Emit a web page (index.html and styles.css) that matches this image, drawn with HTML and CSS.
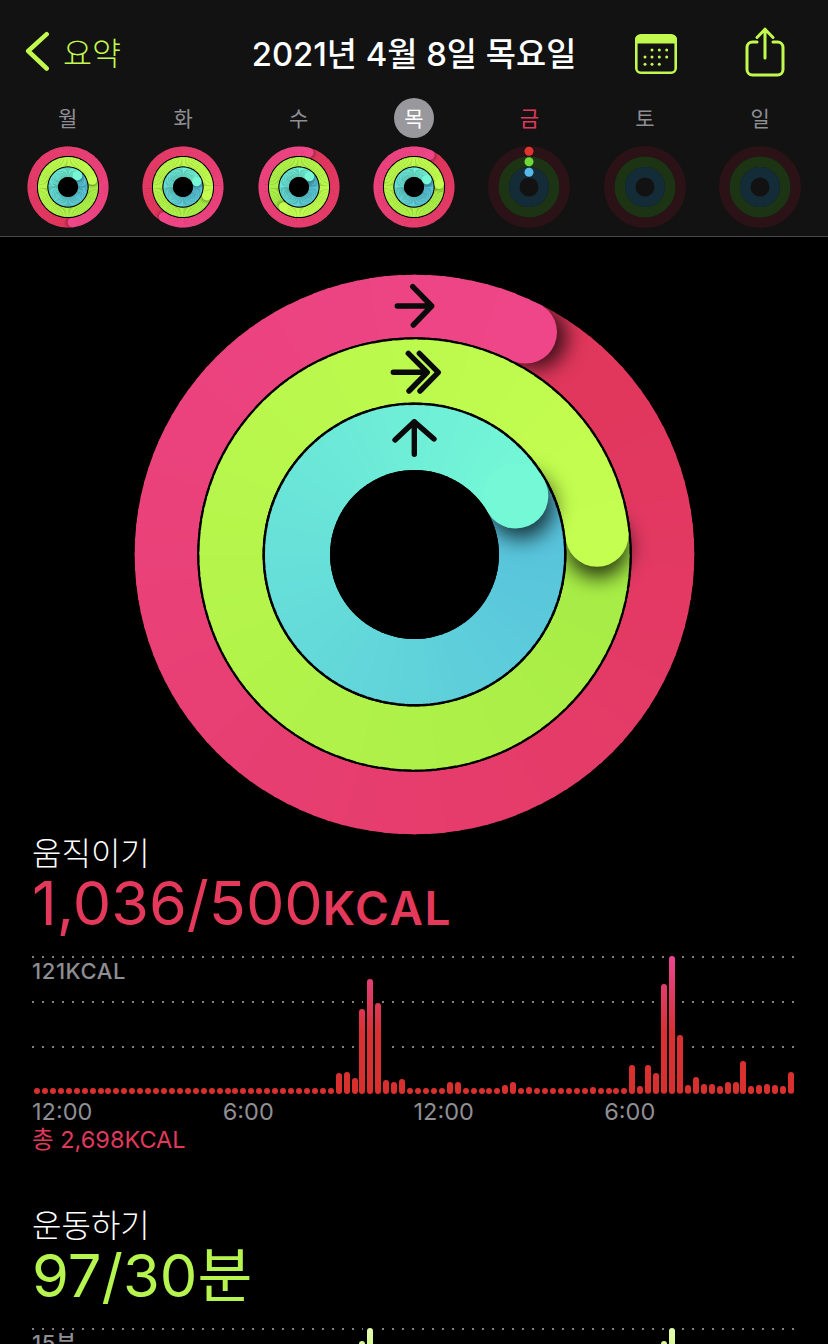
FILE: index.html
```html
<!DOCTYPE html>
<html lang="ko">
    <head>
        <meta charset="utf-8" />
        <meta name="viewport" content="width=device-width, initial-scale=1" />
        <title>활동</title>
        <link rel="stylesheet" href="styles.css">
    </head>
    <body>
        <header class="top">
            <div class="nav">
                <a class="back">
                    <svg class="chevron" width="24" height="40" viewBox="0 0 24 40">
                        <path d="M21.7 3.2 3.2 20 21.7 37.5" />
                    </svg>
                    <span>요약</span>
                </a>
                <h1 class="title">2021년 4월 8일 목요일</h1>
                <div class="nav-icons">
                    <svg class="cal" width="44" height="40" viewBox="0 0 44 40">
                        <rect x="2.3" y="1.3" width="39.4" height="37.4" rx="4.5" />
                        <path class="cal-band" d="M1 9.5V5.5A4.5 4.5 0 0 1 5.5 1h33a4.5 4.5 0 0 1 4.500 4.500v4z" />
                        <g class="cal-dots">
                            <circle cx="18" cy="16" r="1.500" /><circle cx="25.300" cy="16" r="1.500" /><circle cx="32.700" cy="16" r="1.500" />
                            <circle cx="11" cy="23" r="1.500" /><circle cx="18" cy="23" r="1.500" /><circle cx="25.300" cy="23" r="1.500" /><circle cx="32.700" cy="23" r="1.500" />
                            <circle cx="11" cy="30.300" r="1.500" /><circle cx="18" cy="30.300" r="1.500" /><circle cx="25.300" cy="30.300" r="1.500" />
                        </g>
                    </svg>
                    <svg class="share" width="40" height="50" viewBox="0 0 40 50">
                        <path d="M12 15H7.500A5.500 5.500 0 0 0 2 20.500v22A5.500 5.500 0 0 0 7.500 48h25a5.500 5.500 0 0 0 5.500-5.500v-22A5.500 5.500 0 0 0 32.500 15H28" />
                        <path d="M20 31V2M12 10.500 20 2.300l8 8.200" />
                    </svg>
                </div>
            </div>

            <ul class="week">
                <li class="day"><span class="day-name">월</span><svg class="ring" data-ends="173,74,40"></svg></li>
                <li class="day"><span class="day-name">화</span><svg class="ring" data-ends="213,110,69"></svg></li>
                <li class="day"><span class="day-name">수</span><svg class="ring" data-ends="16,218,45"></svg></li>
                <li class="day day-selected"><span class="day-name">목</span><svg class="ring" data-ends="26.600,84,60"></svg></li>
                <li class="day day-today"><span class="day-name">금</span><svg class="ring" data-empty="dots"></svg></li>
                <li class="day"><span class="day-name">토</span><svg class="ring" data-empty="plain"></svg></li>
                <li class="day"><span class="day-name">일</span><svg class="ring" data-empty="plain"></svg></li>
            </ul>
        </header>

        <main>
            <div class="big-ring">
                <svg class="ring-large" data-ends="26.600,84,60">
                    <g class="ring-arrows" id="arrows">
                        <path d="M263.300 32H297.700M278.700 12.700 297.700 32 279.300 51" />
                        <path d="M259.300 98.300H293M274.300 79.300 293.300 98.300 275 117M285.300 79.300 304.300 98.300 286 117" />
                        <path d="M280.300 180.300V147.700M261 166 280.300 147.700 300 165" />
                    </g>
                </svg>
            </div>

            <section class="stat stat-move">
                <h2 class="stat-name">움직이기</h2>
                <p class="stat-value">1,036/500<small>KCAL</small></p>
                <div class="chart" id="move-chart"><span class="chart-max">121KCAL</span></div>
                <div class="hours"><span>12:00</span><span>6:00</span><span>12:00</span><span>6:00</span></div>
                <p class="stat-total">총 2,698KCAL</p>
            </section>

            <section class="stat stat-exercise">
                <h2 class="stat-name">운동하기</h2>
                <p class="stat-value">97/30분</p>
                <div class="chart" id="exercise-chart"><span class="chart-max">15분</span></div>
            </section>
        </main>

        <script src="rings.js"></script>
    </body>
</html>
```

FILE: styles.css
```css
* {
    box-sizing: border-box;
}

body {
    margin: 0;
    height: 100vh;
    overflow: hidden;
    background: #000;
    color: #fff;
    font-family: Inter, "Noto Sans CJK KR", sans-serif;
}

h1,
h2,
p,
ul {
    margin: 0;
    padding: 0;
    font-weight: 400;
}

.top {
    height: 237px;
    padding-top: 27px;
    background: #121212;
    border-bottom: 1px solid #4a4a4a;
}

.nav {
    display: grid;
    grid-template-columns: 1fr auto 1fr;
    align-items: center;
    height: 50px;
    margin-bottom: 21px;
}

.back {
    display: flex;
    align-items: center;
    gap: 14px;
    padding-left: 25px;
    color: #c2f94e;
    font-size: 31.5px;
    font-weight: 300;
    margin-top: -2px;
}

.chevron {
    fill: none;
    stroke: #c2f94e;
    stroke-width: 4.5;
    stroke-linecap: round;
    stroke-linejoin: round;
}

.title {
    font-size: 32.8px;
    font-weight: 500;
    margin-top: -2px;
}

.nav-icons {
    display: flex;
    align-items: center;
    justify-content: flex-end;
    gap: 67px;
    padding-right: 43px;
}

.cal {
    margin-bottom: -4px;
}

.cal rect {
    fill: none;
    stroke: #c2f94e;
    stroke-width: 2.6;
}

.cal-band,
.cal-dots {
    fill: #c2f94e;
}

.share {
    fill: none;
    stroke: #c2f94e;
    stroke-width: 3;
    stroke-linecap: round;
    stroke-linejoin: round;
}

.week {
    display: grid;
    grid-template-columns: repeat(7, 1fr);
    padding: 0 10px;
    list-style: none;
}

.day {
    display: flex;
    flex-flow: column;
    align-items: center;
    gap: 8px;
}

.day-name {
    width: 40px;
    height: 40px;
    border-radius: 50%;
    color: #8e8e93;
    font-size: 21px;
    line-height: 42px;
    text-align: center;
}

.day-selected .day-name {
    background: #98989d;
    color: #fff;
}

.day-today .day-name {
    color: #e0395c;
}

.ring {
    width: 82px;
    height: 82px;
}

.big-ring {
    display: flex;
    justify-content: center;
    padding-top: 37px;
}

.ring-large {
    width: 560px;
    height: 560px;
    overflow: visible;
}

.ring-arrows path {
    fill: none;
    stroke: #0a0a0a;
    stroke-width: 5.4;
    stroke-linecap: round;
    stroke-linejoin: round;
}

.stat {
    padding: 0 33px 0 32px;
}

.stat-exercise {
    margin-top: 53px;
}

.stat-name {
    height: 36px;
    font-size: 32px;
    font-weight: 300;
    line-height: 40px;
}

.stat-value {
    height: 66px;
    font-size: 61px;
    line-height: 67px;
    white-space: nowrap;
}

.stat-value small {
    font-size: 46px;
    font-weight: 600;
    letter-spacing: 1.6px;
    line-height: 1;
}

.stat-move .stat-value {
    color: #e5395c;
}

.stat-exercise .stat-value {
    color: #b6f54f;
    font-size: 59.6px;
}

.chart {
    position: relative;
    isolation: isolate;
    display: flex;
    align-items: flex-end;
    gap: 1.94px;
    height: 138px;
    margin-top: 20px;
    padding-left: 2px;
    --dot: radial-gradient(circle, #808080 0.8px, transparent 1.1px);
    background-image: var(--dot), var(--dot), var(--dot);
    background-size: 10px 2px;
    background-repeat: repeat-x;
    background-position: -4px 0, -4px 45px, -4px 90px;
}

.chart-max {
    position: absolute;
    top: 2px;
    left: 0;
    color: #8e8e93;
    font-size: 22px;
    font-weight: 500;
    letter-spacing: 0.6px;
    line-height: 26px;
}

.bar {
    position: relative;
    flex: none;
    width: 6px;
    border-radius: 3px;
    background-position: bottom;
    background-size: 100% 138px;
}

/* keeps the dotted lines away from the tall bars */
.bar::before {
    content: "";
    position: absolute;
    inset: 0 -4px;
    background: #000;
    z-index: -1;
}

.stat-move .bar {
    background-image: linear-gradient(to top, #d8302e, #da3034 45%, #e03c68 75%, #ea4690);
}

.stat-exercise .bar {
    background-image: linear-gradient(to top, #b6f54f, #c8f870 70%, #e4fcb0);
}

.hours {
    display: grid;
    grid-template-columns: repeat(4, 1fr);
    margin-top: 3px;
    color: #8e8e93;
    font-size: 23.5px;
    line-height: 30px;
}

.stat-total {
    color: #e0395c;
    font-size: 23.5px;
    line-height: 26px;
}
```

FILE: rings.js
```js
const SVG_NS = 'http://www.w3.org/2000/svg'

const COLORS = [
    { from: [224, 54, 90], to: [238, 70, 136], dim: '#2a1216', dot: '#e0352f' },
    { from: [166, 236, 70], to: [196, 254, 80], dim: '#1c3414', dot: '#6fd83a' },
    { from: [86, 192, 220], to: [116, 248, 214], dim: '#142c38', dot: '#5ab8e6' },
]

const LARGE = { c: 280.5, rings: [[248.5, 62.5], [183.5, 63], [117, 65]], shade: 0.75 }
const SMALL = { c: 41, rings: [[35.75, 9.5], [25.25, 9.5], [14.75, 9.5]], shade: 0.3 }

function add(parent, tag, attrs) {
    let el = document.createElementNS(SVG_NS, tag)
    for (let key in attrs) el.setAttribute(key, attrs[key])
    parent.insertBefore(el, parent.querySelector('#arrows'))
    return el
}

function point(c, r, deg) {
    let a = (deg * Math.PI) / 180
    return [c + r * Math.sin(a), c - r * Math.cos(a)]
}

function mix(from, to, t) {
    return `rgb(${from.map((v, i) => Math.round(v + (to[i] - v) * t)).join(',')})`
}

function arc(svg, c, r, w, a, b, color) {
    let [x1, y1] = point(c, r, a)
    let [x2, y2] = point(c, r, b)
    add(svg, 'path', { d: `M${x1} ${y1}A${r} ${r} 0 0 1 ${x2} ${y2}`, fill: 'none', stroke: color, 'stroke-width': w })
}

// the colour runs one full lap and is brightest at the ring's head
function drawRing(svg, c, r, w, end, color, shade) {
    let step = 3
    for (let d = 0; d < 360; d += step) {
        if (d === 180) {
            let [sx, sy] = point(c, r, end + (w * 10) / r)
            let shadow = add(svg, 'circle', { cx: sx, cy: sy, r: w / 2, fill: '#000', 'fill-opacity': shade })
            shadow.style.filter = `blur(${w * 0.16}px)`
        }
        arc(svg, c, r, w, end + d, end + d + step + 0.8, mix(color.from, color.to, d / 360))
    }
    let [x, y] = point(c, r, end)
    add(svg, 'circle', { cx: x, cy: y, r: w / 2, fill: mix(color.from, color.to, 1) })
}

function renderRing(svg) {
    let size = svg.classList.contains('ring-large') ? LARGE : SMALL
    let ends = svg.dataset.ends ? svg.dataset.ends.split(',').map(Number) : null

    size.rings.forEach(([r, w], i) => {
        if (ends) {
            drawRing(svg, size.c, r, w, ends[i], COLORS[i], size.shade)
            add(svg, 'circle', { cx: size.c, cy: size.c, r: r - w / 2, fill: '#000' })
        } else {
            add(svg, 'circle', { cx: size.c, cy: size.c, r: r, fill: 'none', stroke: COLORS[i].dim, 'stroke-width': w + 1 })
        }
    })

    if (svg.dataset.empty === 'dots') {
        size.rings.forEach(([r], i) => {
            add(svg, 'circle', { cx: size.c, cy: size.c - r, r: 4.5, fill: COLORS[i].dot })
        })
    }
}

document.querySelectorAll('.ring, .ring-large').forEach(renderRing)

// bar heights in px by quarter hour, anything not listed is a resting dot
const MOVE_BARS = {
    38: 21.5, 39: 22, 40: 16, 41: 85, 42: 115, 43: 91, 44: 14, 45: 12, 46: 15,
    52: 12.5, 53: 12.5, 59: 9.5, 60: 12.5, 62: 7.5, 70: 7.5,
    75: 29, 76: 8, 77: 28.7, 78: 21.5, 79: 109.7, 80: 138, 81: 58.7, 82: 8.7, 83: 17,
    84: 10, 85: 10, 86: 8, 87: 12.5, 88: 12, 89: 33, 90: 8, 91: 9, 92: 10.5, 93: 9, 94: 8.5, 95: 21.7,
}
const EXERCISE_BARS = { 41: 125, 42: 138, 79: 125, 80: 138 }

function renderBars(id, heights) {
    let chart = document.getElementById(id)
    for (let i = 0; i < 96; i++) {
        let bar = document.createElement('span')
        bar.className = 'bar'
        bar.style.height = `${heights[i] || 6}px`
        chart.appendChild(bar)
    }
}

renderBars('move-chart', MOVE_BARS)
renderBars('exercise-chart', EXERCISE_BARS)
```
